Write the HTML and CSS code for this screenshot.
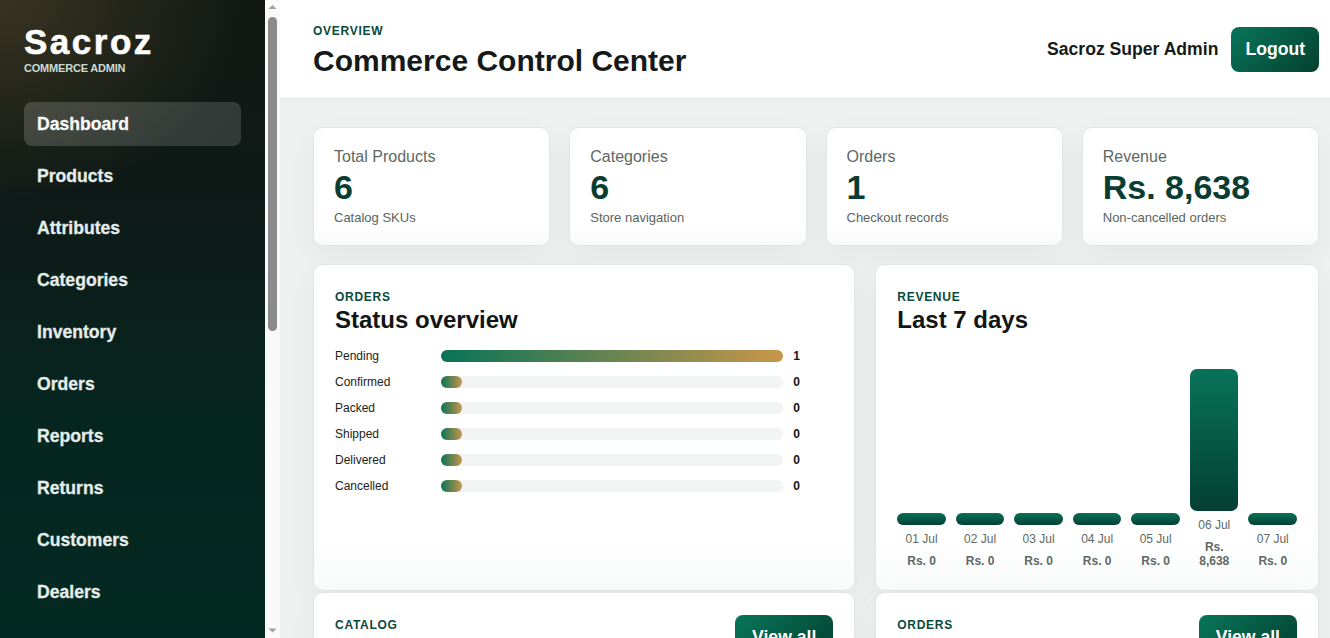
FILE: index.html
```html
<!DOCTYPE html>
<html lang="en">
<head>
  <meta charset="UTF-8">
  <meta name="viewport" content="width=device-width, initial-scale=1.0">
  <title>Sacroz Admin - Dashboard</title>
  <link rel="stylesheet" href="styles.css">
</head>
<body>

  <!-- Sidebar -->
  <aside class="sidebar">
    <div class="sidebar-inner">
      <div class="brand">
        <div class="brand-name">Sacroz</div>
        <div class="brand-sub">COMMERCE ADMIN</div>
      </div>
      <nav class="nav">
        <a class="nav-link active" href="#">Dashboard</a>
        <a class="nav-link" href="#">Products</a>
        <a class="nav-link" href="#">Attributes</a>
        <a class="nav-link" href="#">Categories</a>
        <a class="nav-link" href="#">Inventory</a>
        <a class="nav-link" href="#">Orders</a>
        <a class="nav-link" href="#">Reports</a>
        <a class="nav-link" href="#">Returns</a>
        <a class="nav-link" href="#">Customers</a>
        <a class="nav-link" href="#">Dealers</a>
      </nav>
    </div>
    <!-- scroll rail of the sidebar list -->
    <div class="rail" aria-hidden="true">
      <svg class="rail-arrow" width="15" height="15" viewBox="0 0 15 15"><polygon points="3.5,9 7.5,5 11.5,9" fill="#a0a0a0"/></svg>
      <div class="rail-track"><div class="rail-thumb"></div></div>
      <svg class="rail-arrow" width="15" height="15" viewBox="0 0 15 15"><polygon points="3.5,5.5 7.5,9.5 11.5,5.5" fill="#a0a0a0"/></svg>
    </div>
  </aside>

  <!-- Main -->
  <main class="main">
    <header class="topbar">
      <div class="title-block">
        <div class="eyebrow">OVERVIEW</div>
        <h1 class="page-title">Commerce Control Center</h1>
      </div>
      <div class="user-box">
        <span class="user-name">Sacroz Super Admin</span>
        <button class="btn">Logout</button>
      </div>
    </header>

    <div class="content">
      <!-- Stat cards -->
      <section class="stats">
        <div class="card stat">
          <div class="stat-label">Total Products</div>
          <div class="stat-value">6</div>
          <div class="stat-note">Catalog SKUs</div>
        </div>
        <div class="card stat">
          <div class="stat-label">Categories</div>
          <div class="stat-value">6</div>
          <div class="stat-note">Store navigation</div>
        </div>
        <div class="card stat">
          <div class="stat-label">Orders</div>
          <div class="stat-value">1</div>
          <div class="stat-note">Checkout records</div>
        </div>
        <div class="card stat">
          <div class="stat-label">Revenue</div>
          <div class="stat-value">Rs. 8,638</div>
          <div class="stat-note">Non-cancelled orders</div>
        </div>
      </section>

      <section class="panels">
        <!-- Order status -->
        <div class="card panel">
          <div class="eyebrow">ORDERS</div>
          <h2 class="panel-title">Status overview</h2>
          <div class="status-list">
            <div class="status-row">
              <span>Pending</span>
              <div class="track"><div class="fill" style="width: 100%"></div></div>
              <b>1</b>
            </div>
            <div class="status-row">
              <span>Confirmed</span>
              <div class="track"><div class="fill" style="width: 0%"></div></div>
              <b>0</b>
            </div>
            <div class="status-row">
              <span>Packed</span>
              <div class="track"><div class="fill" style="width: 0%"></div></div>
              <b>0</b>
            </div>
            <div class="status-row">
              <span>Shipped</span>
              <div class="track"><div class="fill" style="width: 0%"></div></div>
              <b>0</b>
            </div>
            <div class="status-row">
              <span>Delivered</span>
              <div class="track"><div class="fill" style="width: 0%"></div></div>
              <b>0</b>
            </div>
            <div class="status-row">
              <span>Cancelled</span>
              <div class="track"><div class="fill" style="width: 0%"></div></div>
              <b>0</b>
            </div>
          </div>
        </div>

        <!-- Revenue chart -->
        <div class="card panel">
          <div class="eyebrow">REVENUE</div>
          <h2 class="panel-title">Last 7 days</h2>
          <div class="chart">
            <div class="day">
              <div class="bar" style="height: 12px"></div>
              <span class="day-label">01 Jul</span>
              <span class="day-value">Rs. 0</span>
            </div>
            <div class="day">
              <div class="bar" style="height: 12px"></div>
              <span class="day-label">02 Jul</span>
              <span class="day-value">Rs. 0</span>
            </div>
            <div class="day">
              <div class="bar" style="height: 12px"></div>
              <span class="day-label">03 Jul</span>
              <span class="day-value">Rs. 0</span>
            </div>
            <div class="day">
              <div class="bar" style="height: 12px"></div>
              <span class="day-label">04 Jul</span>
              <span class="day-value">Rs. 0</span>
            </div>
            <div class="day">
              <div class="bar" style="height: 12px"></div>
              <span class="day-label">05 Jul</span>
              <span class="day-value">Rs. 0</span>
            </div>
            <div class="day">
              <div class="bar" style="height: 142px"></div>
              <span class="day-label">06 Jul</span>
              <span class="day-value">Rs. 8,638</span>
            </div>
            <div class="day">
              <div class="bar" style="height: 12px"></div>
              <span class="day-label">07 Jul</span>
              <span class="day-value">Rs. 0</span>
            </div>
          </div>
        </div>
      </section>

      <section class="panels lists">
        <div class="card panel">
          <div class="panel-head">
            <div class="head-text">
              <div class="eyebrow">CATALOG</div>
              <h2 class="panel-title">Latest products</h2>
            </div>
            <button class="btn">View all</button>
          </div>
        </div>
        <div class="card panel">
          <div class="panel-head">
            <div class="head-text">
              <div class="eyebrow">ORDERS</div>
              <h2 class="panel-title">Recent orders</h2>
            </div>
            <button class="btn">View all</button>
          </div>
        </div>
      </section>
    </div>
  </main>

</body>
</html>
```

FILE: styles.css
```css
/* Basic layout */
body {
  margin: 0;
  height: 100vh;
  display: grid;
  grid-template-columns: 280px 1fr;
  overflow: hidden;
  font-family: "Liberation Sans", Arial, sans-serif;
  color: #141a18;
  background-color: #eef1f0;
}

/* Sidebar */
.sidebar {
  display: flex;
  overflow: hidden;
}

.sidebar-inner {
  flex: 1;
  min-width: 0;
  padding: 24px;
  background:
    radial-gradient(ellipse 240px 200px at 0 0, rgba(66, 58, 34, 0.8), rgba(66, 58, 34, 0) 100%),
    linear-gradient(180deg, #121915 0%, #0f1a17 30%, #06251f 65%, #032a22 100%);
}

.brand-name {
  font-size: 35px;
  font-weight: bold;
  line-height: 1;
  letter-spacing: 2.5px;
  color: #ffffff;
  -webkit-text-stroke: 0.6px #ffffff;
}

.brand-sub {
  margin-top: 3px;
  font-size: 11px;
  font-weight: bold;
  letter-spacing: -0.2px;
  color: #c9dbd3;
}

.nav {
  display: flex;
  flex-direction: column;
  gap: 8px;
  margin-top: 28px;
}

.nav-link {
  display: flex;
  align-items: center;
  height: 44px;
  padding: 0 13px;
  border-radius: 8px;
  font-size: 1.1rem;
  font-weight: bold;
  color: #e6ece9;
  text-decoration: none;
  -webkit-text-stroke: 0.3px #e6ece9;
}

.nav-link.active {
  background: linear-gradient(135deg, rgba(255, 255, 255, 0.17), rgba(255, 255, 255, 0.14));
  color: #ffffff;
}

/* Scroll rail */
.rail {
  flex: none;
  width: 15px;
  display: flex;
  flex-direction: column;
  background-color: #f9f9f9;
}

.rail-arrow {
  display: block;
  flex: none;
}

.rail-track {
  flex: 1;
  padding: 2px 3px;
}

.rail-thumb {
  height: 52%;
  border-radius: 5px;
  background-color: #8b8b8b;
}

/* Main area */
.main {
  overflow: hidden;
  display: flex;
  flex-direction: column;
}

.topbar {
  flex: none;
  height: 99px;
  box-sizing: border-box;
  display: flex;
  justify-content: space-between;
  align-items: center;
  padding: 0 11px 0 33px;
  background-color: #ffffff;
  border-bottom: 1px solid #dfe5e2;
}

.title-block {
  padding-top: 3px;
}

.eyebrow {
  font-size: 12px;
  line-height: 14px;
  font-weight: bold;
  letter-spacing: 0.06em;
  color: #0a4a3b;
}

.page-title {
  margin: 5px 0 0;
  font-size: 30px;
  line-height: 35px;
  color: #151a18;
}

.user-box {
  display: flex;
  align-items: center;
  gap: 13px;
}

.user-name {
  font-size: 1.1rem;
  font-weight: bold;
  color: #161b19;
}

.btn {
  border: none;
  border-radius: 8px;
  padding: 12px 14px;
  font-family: inherit;
  font-size: 1.1rem;
  font-weight: bold;
  line-height: 21px;
  color: #ffffff;
  background: linear-gradient(135deg, #08765a, #04402f);
  cursor: pointer;
}

.content {
  padding: 28px 11px 0 33px;
}

/* Cards */
.card {
  background: linear-gradient(180deg, #ffffff 85%, #f9fafa);
  border: 1px solid #e2e7e5;
  border-radius: 10px;
  box-shadow: 0 10px 28px rgba(20, 45, 38, 0.05);
}

.stats {
  display: grid;
  grid-template-columns: repeat(4, 1fr);
  gap: 19px;
}

.stat {
  padding: 19px 20px;
}

.stat-label {
  font-size: 16px;
  line-height: 20px;
  color: #5d6864;
}

.stat-value {
  font-size: 34px;
  line-height: 40px;
  font-weight: bold;
  color: #0a3d32;
}

.stat-note {
  margin-top: 3px;
  font-size: 13px;
  line-height: 16px;
  color: #5a6460;
}

.panels {
  display: grid;
  grid-template-columns: 11fr 9fr;
  gap: 20px;
  margin-top: 18px;
}

.panels.lists {
  margin-top: 1px;
}

.panel {
  padding: 25px 21px 22px;
}

.panel-title {
  margin: 1px 0 0;
  font-size: 24px;
  line-height: 29px;
  color: #111614;
}

/* Status bars */
.status-list {
  display: flex;
  flex-direction: column;
  gap: 12px;
  margin-top: 15px;
}

.status-row {
  display: grid;
  grid-template-columns: 96px 1fr 40px;
  gap: 10px;
  align-items: center;
  font-size: 12px;
  line-height: 14px;
  color: #1b2220;
}

.status-row b {
  color: #111614;
}

.track {
  height: 12px;
  border-radius: 6px;
  background-color: #f2f4f3;
}

.fill {
  min-width: 21px;
  height: 100%;
  border-radius: 6px;
  background: linear-gradient(90deg, #087358, #c8964a);
}

/* Revenue chart */
.chart {
  display: flex;
  align-items: flex-end;
  gap: 10px;
  height: 222px;
  margin-top: 12px;
}

.day {
  flex: 1;
  min-width: 0;
  display: flex;
  flex-direction: column;
  align-items: center;
  text-align: center;
  font-size: 12px;
  line-height: 14px;
  color: #5e6965;
}

.bar {
  width: 100%;
  border-radius: 7px;
  background: linear-gradient(180deg, #087358, #043f33);
}

.day-label {
  margin-top: 7px;
}

.day-value {
  margin-top: 8px;
  font-weight: bold;
}

/* Lower panels */
.panel-head {
  display: flex;
  justify-content: space-between;
  align-items: flex-start;
}

.panel-head .btn {
  margin-top: -3px;
  padding: 12px 17px;
}
```
